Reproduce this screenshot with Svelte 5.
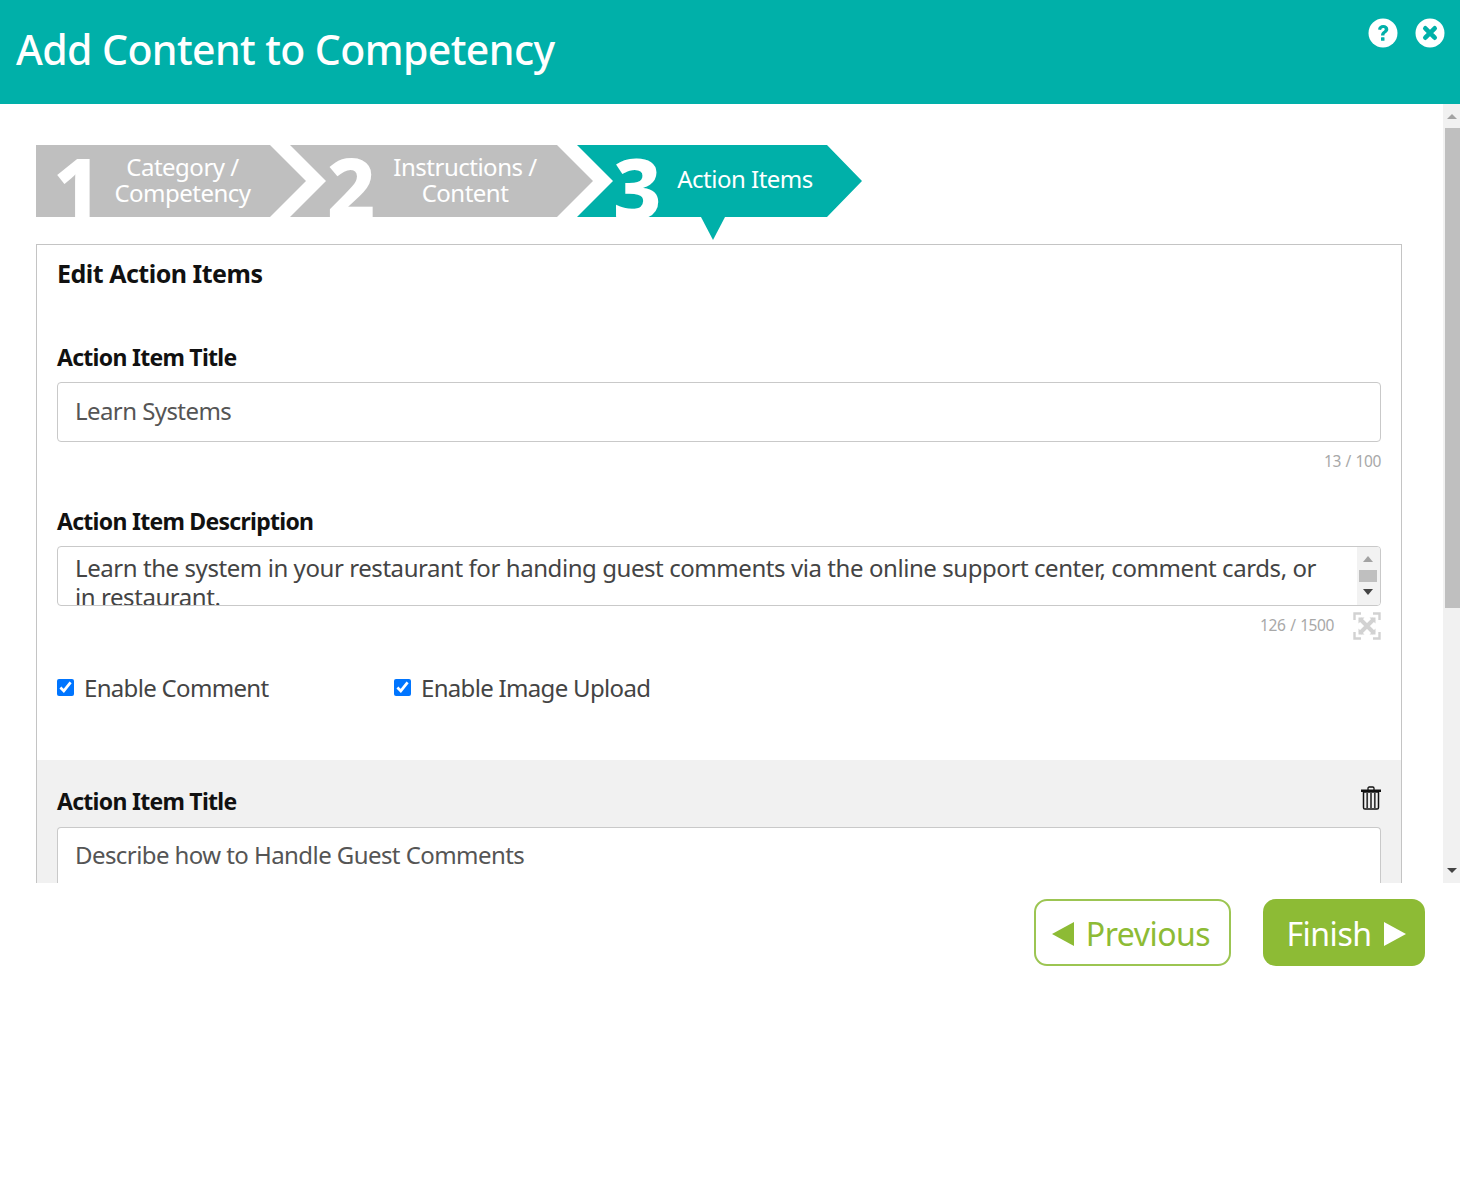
<script>
  const steps = [
    { n: '1', label: ['Category /', 'Competency'], cls: 'first' },
    { n: '2', label: ['Instructions /', 'Content'], cls: 'second' },
    { n: '3', label: ['Action Items'], cls: 'third' }
  ];
</script>

<div class="page">
  <header class="top">
    <h1>Add Content to Competency</h1>
    <div class="top-icons">
      <svg viewBox="0 0 30 30" width="30" height="30" aria-label="Help">
        <circle cx="15" cy="15" r="14.5" fill="#fff" />
        <path d="M10 11.6c.3-3 2.5-4.6 5.2-4.6 3 0 5.1 1.8 5.1 4.3 0 3.6-3.9 3.4-3.9 6.2h-3.4c0-4.4 3.7-4.300 3.700-6.100 0-.9-.6-1.400-1.600-1.400-1.100 0-1.700.7-1.900 1.900z" fill="#00b0a9" />
        <rect x="13" y="19.200" width="3.500" height="3.500" rx=".5" fill="#00b0a9" />
      </svg>
      <svg viewBox="0 0 30 30" width="30" height="30" aria-label="Close">
        <circle cx="15" cy="15" r="14.5" fill="#fff" />
        <path d="M10.300 10.300l9.400 9.400M19.700 10.300l-9.400 9.400" stroke="#00b0a9" stroke-width="4.600" stroke-linecap="round" />
      </svg>
    </div>
  </header>

  <div class="body">
    <main class="scroll">
      <div class="steps">
        {#each steps as s}
          <div class="step {s.cls}">
            <span class="num">{s.n}</span>
            <span class="label">{#each s.label as l}<span>{l}</span>{/each}</span>
          </div>
        {/each}
        <span class="pointer"></span>
      </div>

      <section class="panel">
        <h2>Edit Action Items</h2>
        <div class="block">
          <div class="lbl">Action Item Title</div>
          <div class="field">Learn Systems</div>
          <div class="count">13 / 100</div>

          <div class="lbl second-lbl">Action Item Description</div>
          <div class="field area">
            <div class="area-text">Learn the system in your restaurant for handing guest comments via the online support center, comment cards, or in restaurant.</div>
            <div class="mini-bar">
              <span class="arrow up"></span>
              <span class="mini-thumb"></span>
              <span class="arrow down"></span>
            </div>
          </div>
          <div class="count with-icon">
            <span>126 / 1500</span>
            <svg viewBox="0 0 28 28" width="28" height="28" fill="none" stroke="#d2d2d2">
              <path d="M1.500 8V1.500H8M20 1.500h6.500V8M26.500 20v6.500H20M8 26.500H1.500V20" stroke-width="2.400" />
              <path d="M7 7l14 14M21 7L7 21" stroke-width="4" />
              <path d="M5.500 5.500h6l-6 6zM22.500 5.500h-6l6 6zM5.500 22.500h6l-6-6zM22.500 22.500h-6l6-6z" fill="#d2d2d2" stroke="none" />
            </svg>
          </div>

          <div class="checks">
            <label class="chk one"><input type="checkbox" checked /> <span>Enable Comment</span></label>
            <label class="chk"><input type="checkbox" checked /> <span>Enable Image Upload</span></label>
          </div>
        </div>

        <div class="item">
          <div class="item-head">
            <div class="lbl">Action Item Title</div>
            <svg class="trash" viewBox="0 0 20 24" width="20" height="24" aria-label="Delete">
              <path d="M0 3.500h20v2.500H0z" fill="#111" />
              <path d="M7 4V2.200C7 1.500 7.500 1 8.200 1h3.600c.7 0 1.200.5 1.200 1.200V4" fill="none" stroke="#111" stroke-width="1.300" />
              <path d="M2.500 6h15v15.500c0 1-.6 1.600-1.500 1.600H4c-.9 0-1.500-.6-1.500-1.600z" fill="none" stroke="#111" stroke-width="1.500" />
              <path d="M6.200 7v15M10 7v15M13.800 7v15" stroke="#333" stroke-width="1.700" />
            </svg>
          </div>
          <div class="field">Describe how to Handle Guest Comments</div>
        </div>
      </section>
    </main>

    <div class="bar">
      <span class="arrow up"></span>
      <span class="thumb"></span>
      <span class="rest"></span>
      <span class="arrow down"></span>
    </div>
  </div>

  <footer class="actions">
    <button class="btn prev"><span class="tri left"></span>Previous</button>
    <button class="btn next">Finish<span class="tri right"></span></button>
  </footer>
</div>

<style>
  :global(body) { margin: 0; background: #fff; }
  .page {
    width: 1460px;
    height: 1180px;
    font-family: "Noto Sans", "Open Sans", sans-serif;
    color: #333;
    overflow: hidden;
  }
  .top {
    height: 104px;
    background: #00b0a9;
    display: flex;
    justify-content: space-between;
    padding: 0 15px 0 16px;
    box-sizing: border-box;
  }
  h1 {
    margin: 0;
    padding-top: 21px;
    font-size: 41px;
    line-height: 56px;
    font-weight: 500;
    color: #fff;
    letter-spacing: -0.6px;
    white-space: nowrap;
  }
  .top-icons { display: flex; gap: 17px; padding-top: 18px; }
  .body { display: flex; height: 779px; }
  .scroll { flex: 0 0 1443px; overflow: hidden; padding: 41px 0 0 36px; box-sizing: border-box; }
  .steps { position: relative; display: flex; height: 72px; margin-bottom: 27px; }
  .step {
    position: relative;
    height: 72px;
    overflow: hidden;
    color: #fff;
    background: #bfbfbf;
    box-sizing: border-box;
    flex: none;
  }
  .first { width: 270px; clip-path: polygon(0 0, 234px 0, 270px 36px, 234px 72px, 0 72px); }
  .second { width: 303px; margin-left: -16px; clip-path: polygon(0 0, 267px 0, 303px 36px, 267px 72px, 0 72px, 36px 36px); }
  .third { width: 285px; margin-left: -16px; background: #00b0a9; clip-path: polygon(0 0, 250px 0, 285px 36px, 250px 72px, 0 72px, 36px 36px); }
  .num {
    position: absolute;
    top: 0;
    font-size: 84px;
    line-height: 84px;
    font-weight: 800;
  }
  .first .num { left: 17px; }
  .second .num { left: 37px; }
  .third .num { left: 36px; }
  .label {
    display: flex;
    flex-direction: column;
    align-items: center;
    justify-content: center;
    font-size: 24px;
    line-height: 25.6px;
    letter-spacing: -0.5px;
    position: absolute;
    top: 9px;
    white-space: nowrap;
  }
  .first .label { left: 79px; width: 135px; }
  .second .label { left: 100px; width: 150px; }
  .third .label { left: 100px; width: 136px; top: 21px; }
  .pointer {
    position: absolute;
    left: 665px;
    top: 72px;
    width: 24px;
    height: 23px;
    background: #00b0a9;
    clip-path: polygon(0 0, 100% 0, 50% 100%);
  }
  .panel {
    width: 1366px;
    box-sizing: border-box;
    border: 1px solid #c4c4c4;
    border-bottom: 0;
    height: 640px;
  }
  h2 {
    margin: 0;
    padding: 11px 20px 0;
    font-size: 25px;
    line-height: 34px;
    font-weight: 700;
    color: #111;
    letter-spacing: -0.5px;
  }
  .block { padding: 52px 20px 0; height: 470px; box-sizing: border-box; }
  .lbl {
    font-size: 23px;
    line-height: 30px;
    font-weight: 700;
    color: #111;
    letter-spacing: -0.72px;
  }
  .second-lbl { margin-top: 28px; }
  .field {
    margin-top: 10px;
    height: 60px;
    width: 1324px;
    box-sizing: border-box;
    border: 1px solid #c9c9c9;
    border-radius: 4px;
    padding: 0 17px;
    background: #fff;
    font-size: 24px;
    line-height: 55px;
    color: #555;
    letter-spacing: -0.57px;
  }
  .count {
    height: 36px;
    font-size: 15.5px;
    line-height: 38px;
    text-align: right;
    color: #a8a8a8;
    letter-spacing: -0.4px;
    word-spacing: 1px;
  }
  .with-icon { display: flex; justify-content: flex-end; align-items: center; gap: 19px; line-height: 1; padding-top: 3px; height: 36px; box-sizing: border-box; }
  .area { display: flex; padding: 0 0 0 17px; overflow: hidden; line-height: 29px; letter-spacing: -0.43px; }
  .area-text { flex: 1; padding: 6px 28px 0 0; color: #444; }
  .mini-bar {
    flex: 0 0 23px;
    display: flex;
    flex-direction: column;
    align-items: center;
    background: #f2f2f2;
    padding: 9px 1px 10px 0;
    box-sizing: border-box;
    justify-content: space-between;
  }
  .mini-thumb { width: 18px; height: 12px; background: #bfbfbf; }
  .arrow { width: 0; height: 0; border-left: 5px solid transparent; border-right: 5px solid transparent; }
  .arrow.up { border-bottom: 6px solid #a3a3a3; }
  .arrow.down { border-top: 6px solid #444; }
  .checks { display: flex; margin-top: 29px; }
  .chk { display: flex; align-items: center; gap: 10px; font-size: 24px; line-height: 34px; color: #444; letter-spacing: -0.68px; }
  .chk.one { width: 337px; }
  .chk input { width: 17px; height: 17px; margin: 0 0 2px; accent-color: #0075ff; }
  .item { background: #f1f1f1; padding: 26px 20px 0; height: 130px; box-sizing: border-box; }
  .item-head { display: flex; justify-content: space-between; align-items: flex-start; }
  .trash { margin-top: 0; }
  .item .field { margin-top: 11px; border-bottom: 0; line-height: 54px; }
  .bar { flex: 0 0 17px; background: #f1f1f1; display: flex; flex-direction: column; align-items: center; padding: 10px 0 10px; box-sizing: border-box; }
  .bar .arrow.up { border-bottom-color: #a3a3a3; border-bottom-width: 5px; }
  .bar .arrow.down { border-top-color: #444; border-top-width: 5px; }
  .thumb { width: 15px; height: 480px; background: #bfbfbf; margin: 9px 0 0 2px; }
  .rest { flex: 1; }
  .actions { display: flex; justify-content: flex-end; gap: 32px; padding: 16px 35px 0 0; }
  .btn {
    height: 67px;
    border-radius: 13px;
    font-family: inherit;
    font-size: 32px;
    display: flex;
    align-items: center;
    justify-content: center;
    gap: 12px;
    box-sizing: border-box;
    padding: 2px 0 0;
    letter-spacing: -0.5px;
  }
  .prev { width: 197px; background: #fff; border: 2px solid #9cc552; color: #8dbb35; padding-right: 3px; }
  .next { width: 162px; background: #8dbb35; border: 0; color: #fff; padding-left: 4px; }
  .tri { width: 0; height: 0; border-top: 12px solid transparent; border-bottom: 12px solid transparent; }
  .tri.left { border-right: 22px solid #8dbb35; }
  .tri.right { border-left: 22px solid #fff; }
</style>
